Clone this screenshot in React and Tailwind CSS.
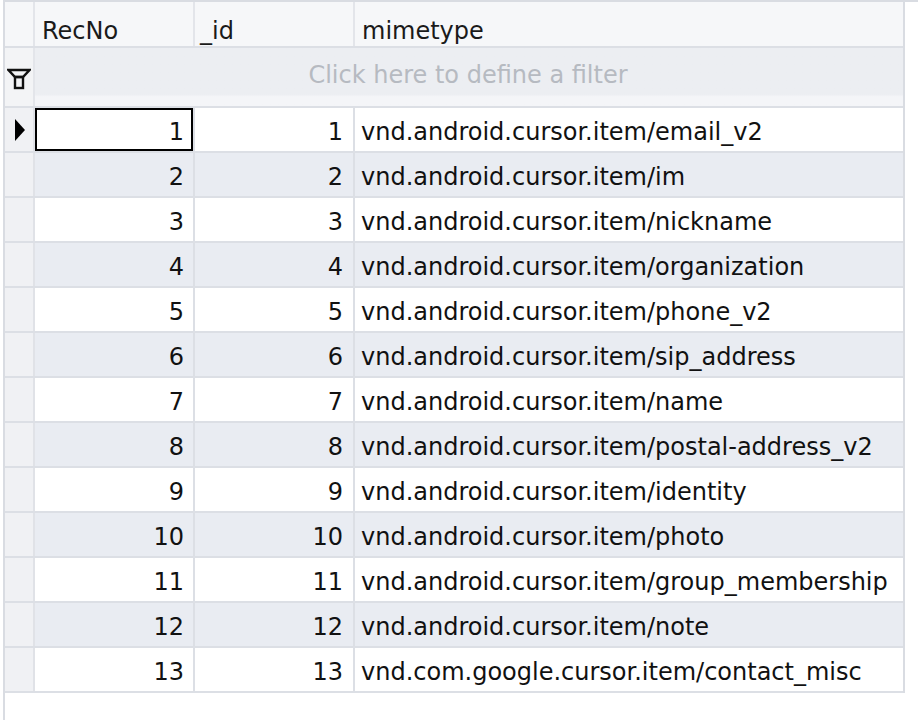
const rows = [
  [1, 1, "vnd.android.cursor.item/email_v2"],
  [2, 2, "vnd.android.cursor.item/im"],
  [3, 3, "vnd.android.cursor.item/nickname"],
  [4, 4, "vnd.android.cursor.item/organization"],
  [5, 5, "vnd.android.cursor.item/phone_v2"],
  [6, 6, "vnd.android.cursor.item/sip_address"],
  [7, 7, "vnd.android.cursor.item/name"],
  [8, 8, "vnd.android.cursor.item/postal-address_v2"],
  [9, 9, "vnd.android.cursor.item/identity"],
  [10, 10, "vnd.android.cursor.item/photo"],
  [11, 11, "vnd.android.cursor.item/group_membership"],
  [12, 12, "vnd.android.cursor.item/note"],
  [13, 13, "vnd.com.google.cursor.item/contact_misc"],
];

const FilterIcon = () => (
  <svg width="24" height="22" viewBox="0 0 24 22" fill="none" className="shrink-0">
    <path d="M1.5 2 H22.5 L16 9 H8 Z" stroke="#111" strokeWidth="2.4" />
    <rect x="8" y="9" width="8" height="11" stroke="#111" strokeWidth="2.4" />
  </svg>
);

const RowArrow = () => (
  <svg width="11" height="24" viewBox="0 0 11 24" className="shrink-0">
    <path d="M0 1 L10 12 L0 23 Z" fill="#000" />
  </svg>
);

export default function App() {
  return (
    <div className="w-[918px] h-[720px] bg-white pl-[3px] overflow-hidden font-['DejaVu_Sans',sans-serif] text-[24px] text-[#111]">
      <div className="h-full border-l-2 border-t-2 border-[#d9dce2]">
        <div className="w-[900px] border-r-2 border-[#d9dce2]">
          {/* Header */}
          <div className="flex h-[46px] border-b-2 border-[#dcdfe5] bg-[#f6f7f9] text-[#1a1a1a]">
            <div className="w-[30px] border-r-2 border-[#e3e5ea]" />
            <div className="w-[160px] border-r-2 border-[#e3e5ea] pl-[7px] pt-[17px] leading-none">RecNo</div>
            <div className="w-[160px] border-r-2 border-[#e3e5ea] pl-[5px] pt-[17px] leading-none">_id</div>
            <div className="flex-1 pl-[7px] pt-[17px] leading-none">mimetype</div>
          </div>

          {/* Filter row */}
          <div className="flex h-[60px] border-b-2 border-[#dcdfe5] bg-gradient-to-b from-[#eceef2] from-80% to-[#f4f5f8] to-84%">
            <div className="w-[30px] border-r-2 border-[#e3e5ea] flex items-start pt-[20px] pl-[2px] bg-[#f3f4f6]">
              <FilterIcon />
            </div>
            <div className="flex-1 flex justify-center pt-[15px] pr-[2px] leading-none text-[#b6bac1]">
              Click here to define a filter
            </div>
          </div>

          {/* Data rows */}
          {rows.map(([rec, id, mime], i) => {
            const even = i % 2 === 1;
            return (
              <div
                key={rec}
                className={`flex h-[45px] border-b-2 border-[#dcdfe5] ${even ? "bg-[#e9ecf2]" : "bg-white"}`}
              >
                <div className="w-[30px] border-r-2 border-[#e0e2e7] bg-[#f0f1f4] flex items-center pl-[10px]">
                  {i === 0 && <RowArrow />}
                </div>
                <div className="relative w-[160px] border-r-2 border-[#dcdfe5] flex items-center justify-end pr-[9px] pt-[4px]">
                  {i === 0 && <div className="absolute inset-0 border-2 border-black" />}
                  {rec}
                </div>
                <div className="w-[160px] border-r-2 border-[#dcdfe5] flex items-center justify-end pr-[10px] pt-[4px]">
                  {id}
                </div>
                <div className="flex-1 flex items-center pl-[6px] pt-[4px] whitespace-nowrap">{mime}</div>
              </div>
            );
          })}
        </div>
      </div>
    </div>
  );
}
